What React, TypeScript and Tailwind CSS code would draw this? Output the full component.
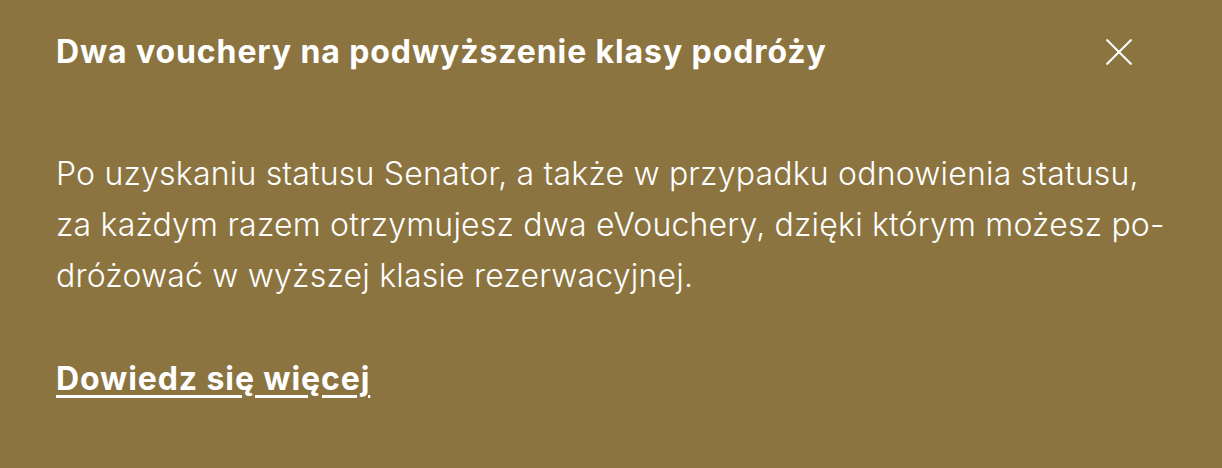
import React from "react";

export default function App() {
  return (
    <div className="w-[1222px] h-[468px] bg-[#8b7440] text-white" style={{ fontFamily: "Inter, 'Open Sans', sans-serif" }}>
      <div className="flex items-start justify-between pl-[56px] pr-[90px] pt-[33px]">
        <h2 className="text-[32px] leading-[38px] font-bold tracking-[0.9px]">Dwa vouchery na podwyższenie klasy podróży</h2>
        <button className="mt-[6px] w-[26px] h-[26px] flex items-center justify-center" aria-label="Zamknij">
          <svg width="26" height="26" viewBox="0 0 26 26" fill="none" stroke="white" strokeWidth="2">
            <path d="M0.5 0.5 L25.5 25.5 M25.5 0.5 L0.5 25.5" />
          </svg>
        </button>
      </div>
      <p className="pl-[56px] mt-[77px] text-[32px] leading-[51px] font-light tracking-[0.2px]">
        <span className="block">Po uzyskaniu statusu Senator, a także w przypadku odnowienia statusu,</span>
        <span className="block">za każdym razem otrzymujesz dwa eVouchery, dzięki którym możesz po-</span>
        <span className="block">dróżować w wyższej klasie rezerwacyjnej.</span>
      </p>
      <a href="#" className="block ml-[56px] mt-[58px] w-fit text-[32px] leading-[40px] font-bold underline underline-offset-[5px] decoration-[3px] tracking-[0.9px]">Dowiedz się więcej</a>
    </div>
  );
}
